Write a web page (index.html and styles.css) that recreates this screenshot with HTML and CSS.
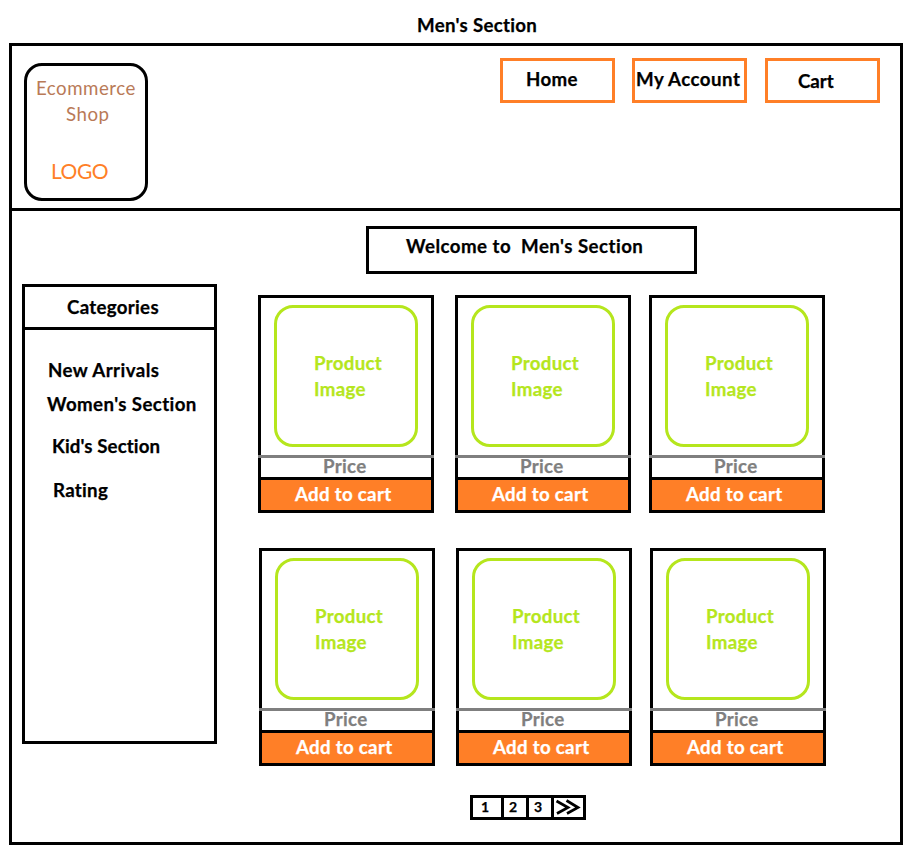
FILE: index.html
```html
<!DOCTYPE html>
<html lang="en">
<head>
<meta charset="utf-8">
<title>Men's Section</title>
<link rel="stylesheet" href="styles.css">
</head>
<body>
<h1 class="page-title">Men's Section</h1>
<div class="frame">
  <header class="header">
    <div class="logo">
      <span class="logo-name">Ecommerce</span>
      <span class="logo-shop">Shop</span>
      <span class="logo-mark">LOGO</span>
    </div>
    <nav class="nav">
      <a class="nav-item home">Home</a>
      <a class="nav-item account">My Account</a>
      <a class="nav-item cart">Cart</a>
    </nav>
  </header>
  <div class="body">
    <aside class="sidebar">
      <h2 class="sidebar-title">Categories</h2>
      <ul class="categories">
        <li class="arrivals">New Arrivals</li>
        <li class="women">Women's Section</li>
        <li class="kids">Kid's Section</li>
        <li class="rating">Rating</li>
      </ul>
    </aside>
    <main class="main">
      <div class="welcome">Welcome to&nbsp; Men's Section</div>
      <div class="products">
        <article class="product"><div class="image">Product<br>Image</div><div class="price">Price</div><div class="add">Add to cart</div></article>
        <article class="product"><div class="image">Product<br>Image</div><div class="price">Price</div><div class="add">Add to cart</div></article>
        <article class="product"><div class="image">Product<br>Image</div><div class="price">Price</div><div class="add">Add to cart</div></article>
      </div>
      <div class="products second">
        <article class="product"><div class="image">Product<br>Image</div><div class="price">Price</div><div class="add">Add to cart</div></article>
        <article class="product"><div class="image">Product<br>Image</div><div class="price">Price</div><div class="add">Add to cart</div></article>
        <article class="product"><div class="image">Product<br>Image</div><div class="price">Price</div><div class="add">Add to cart</div></article>
      </div>
      <div class="pager">
        <span class="page first">1</span>
        <span class="page">2</span>
        <span class="page">3</span>
        <span class="next"><svg width="29" height="19" viewBox="0 0 29 19" fill="none" stroke="#000" stroke-width="2.7"><path d="M2.500 3 14 9.500 3 15.500M12.500 2.500 24 9.500 13 15.500"/></svg></span>
      </div>
    </main>
  </div>
</div>
</body>
</html>
```
FILE: styles.css
```css
* { box-sizing: border-box; }
body {
  margin: 0;
  height: 863px;
  padding: 12px 13px 0 9px;
  background: #fff;
  color: #000;
  font: bold 18.7px/26px Lato, "Liberation Sans", sans-serif;
  font-variant-ligatures: none;
  letter-spacing: .3px;
  -webkit-text-stroke-width: .25px;
  overflow: hidden;
}
h1, h2, ul { margin: 0; padding: 0; font: inherit; list-style: none; font-variant-ligatures: none; }
.page-title { padding-left: 408px; height: 31px; }
.frame { width: 894px; height: 802px; border: 3px solid #000; }
.header {
  display: flex;
  justify-content: space-between;
  height: 165px;
  padding: 12px 20px 0 12px;
  border-bottom: 3px solid #000;
}
.logo {
  display: flex;
  flex-direction: column;
  width: 124px;
  height: 138px;
  margin-top: 5px;
  padding-top: 9px;
  border: 3px solid #000;
  border-radius: 18px;
  font-weight: normal;
  color: #b97a57;
  letter-spacing: .5px;
  -webkit-text-stroke-width: 0;
}
.logo-name { padding-left: 9px; }
.logo-shop { padding-left: 39px; }
.logo-mark { margin-top: 31px; padding-left: 24px; color: #ff7f27; font-size: 21px; letter-spacing: -.5px; }
.nav { display: flex; }
.nav-item {
  width: 115px;
  height: 45px;
  border: 3px solid #ff7f27;
  white-space: nowrap;
}
.home { padding: 5px 0 0 23px; }
.account { margin-left: 17px; padding: 5px 0 0 1px; letter-spacing: .45px; }
.cart { margin-left: 18px; padding: 7px 0 0 30px; letter-spacing: 0; }
.body { display: flex; padding-left: 10px; }
.sidebar {
  width: 195px;
  height: 460px;
  margin-top: 73px;
  border: 3px solid #000;
}
.sidebar-title { height: 43px; padding: 7px 0 0 42px; border-bottom: 3px solid #000; }
.categories { padding: 27px 0 0 22px; white-space: nowrap; }
.arrivals { padding-left: 1px; letter-spacing: .45px; }
.women { margin-top: 8px; letter-spacing: .4px; }
.kids { margin-top: 16px; padding-left: 5px; letter-spacing: .1px; }
.rating { margin-top: 18px; padding-left: 6px; }
.main { padding: 15px 0 0 41px; }
.welcome {
  width: 331px;
  height: 48px;
  margin-left: 108px;
  padding: 4px 0 0 37px;
  border: 3px solid #000;
  letter-spacing: .46px;
}
.products {
  display: grid;
  grid-template-columns: 176px 176px 176px;
  column-gap: 21px;
  margin-top: 21px;
}
.products .product:last-child { margin-left: -3px; margin-right: 3px; }
.second { margin: 35px 0 0 1px; }
.product {
  height: 218px;
  padding-top: 7px;
  border: 3px solid #000;
}
.image {
  width: 144px;
  height: 142px;
  margin: 0 13px 8px;
  padding: 42px 0 0 37px;
  border: 3px solid #b5e61d;
  border-radius: 19px;
  color: #b5e61d;
}
.price {
  height: 22px;
  margin: 0 -3px;
  padding-left: 65px;
  border-top: 3px solid #7f7f7f;
  line-height: 17px;
  color: #7f7f7f;
}
.add {
  height: 33px;
  padding-left: 34px;
  border-top: 3px solid #000;
  background: #ff7f27;
  line-height: 28px;
  color: #fff;
}
.pager {
  display: flex;
  width: 116px;
  height: 25px;
  margin: 29px 0 0 212px;
  border: 3px solid #000;
  font-size: 14px;
  line-height: 18px;
}
.page { width: 25px; padding-left: 5px; border-right: 3px solid #000; }
.first { width: 31px; padding-left: 8px; }
.next { width: 29px; }
.next svg { display: block; }
```
